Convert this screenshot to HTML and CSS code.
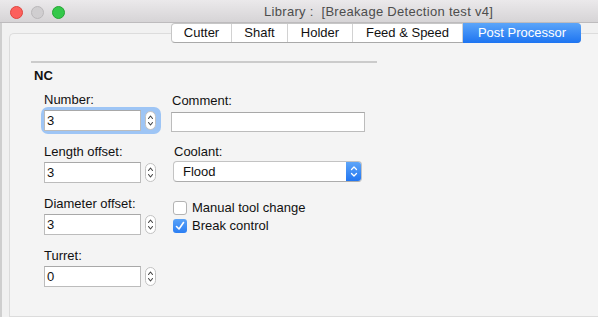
FILE: index.html
```html
<!DOCTYPE html>
<html>
<head>
<meta charset="utf-8">
<link rel="stylesheet" href="styles.css">
</head>
<body>
<div class="window">
  <div class="titlebar">
    <div class="lights">
      <span class="light red"></span>
      <span class="light gray"></span>
      <span class="light green"></span>
    </div>
    <div class="title">Library :&nbsp; [Breakage Detection test v4]</div>
  </div>
  <div class="content">
    <div class="tabs">
      <div class="tab t1">Cutter</div>
      <div class="tab t2">Shaft</div>
      <div class="tab t3">Holder</div>
      <div class="tab t4">Feed &amp; Speed</div>
      <div class="tab t5 active">Post Processor</div>
    </div>
    <div class="tabbox">
      <div class="section">
        <div class="rule"></div>
        <div class="section-title">NC</div>
        <div class="form">
          <div class="col left">
            <div class="group">
              <div class="label">Number:</div>
              <div class="field focus">
                <div class="input">3</div>
                <div class="stepper"><svg width="11" height="19" viewBox="0 0 11 19"><path d="M3.5 7.5 L5.5 5 L7.5 7.5 M3.5 11.5 L5.5 14 L7.5 11.5" fill="none" stroke="#444" stroke-width="1.1" stroke-linecap="round" stroke-linejoin="round"/></svg></div>
              </div>
            </div>
            <div class="group">
              <div class="label">Length offset:</div>
              <div class="field">
                <div class="input">3</div>
                <div class="stepper"><svg width="11" height="19" viewBox="0 0 11 19"><path d="M3.5 7.5 L5.5 5 L7.5 7.5 M3.5 11.5 L5.5 14 L7.5 11.5" fill="none" stroke="#444" stroke-width="1.1" stroke-linecap="round" stroke-linejoin="round"/></svg></div>
              </div>
            </div>
            <div class="group">
              <div class="label">Diameter offset:</div>
              <div class="field">
                <div class="input">3</div>
                <div class="stepper"><svg width="11" height="19" viewBox="0 0 11 19"><path d="M3.5 7.5 L5.5 5 L7.5 7.5 M3.5 11.5 L5.5 14 L7.5 11.5" fill="none" stroke="#444" stroke-width="1.1" stroke-linecap="round" stroke-linejoin="round"/></svg></div>
              </div>
            </div>
            <div class="group">
              <div class="label">Turret:</div>
              <div class="field">
                <div class="input">0</div>
                <div class="stepper"><svg width="11" height="19" viewBox="0 0 11 19"><path d="M3.5 7.5 L5.5 5 L7.5 7.5 M3.5 11.5 L5.5 14 L7.5 11.5" fill="none" stroke="#444" stroke-width="1.1" stroke-linecap="round" stroke-linejoin="round"/></svg></div>
              </div>
            </div>
          </div>
          <div class="col right">
            <div class="label comment-label">Comment:</div>
            <div class="text-input"></div>
            <div class="label coolant-label">Coolant:</div>
            <div class="popup">
              <span class="popup-text">Flood</span>
              <span class="popup-arrows"><svg width="16" height="21" viewBox="0 0 16 21"><path d="M5.5 8.5 L8 6 L10.5 8.5 M5.5 12.5 L8 15 L10.5 12.5" fill="none" stroke="#fff" stroke-width="1.3" stroke-linecap="round" stroke-linejoin="round"/></svg></span>
            </div>
            <div class="checks">
              <div class="check-row"><span class="checkbox"></span><span>Manual tool change</span></div>
              <div class="check-row"><span class="checkbox checked"><svg width="14" height="14" viewBox="0 0 14 14"><path d="M3.5 7.5 L6 10 L10.5 3.5" fill="none" stroke="#fff" stroke-width="1.6" stroke-linecap="round" stroke-linejoin="round"/></svg></span><span>Break control</span></div>
            </div>
          </div>
        </div>
      </div>
    </div>
  </div>
</div>
</body>
</html>
```
FILE: styles.css
```css
html, body {
  margin: 0;
  padding: 0;
}
body {
  width: 598px;
  height: 317px;
  overflow: hidden;
  font-family: "Liberation Sans", Arial, sans-serif;
  font-size: 13px;
  color: #111;
  background: #f0f0f0;
}
.window {
  width: 598px;
  height: 317px;
  display: flex;
  flex-direction: column;
  overflow: hidden;
}
.titlebar {
  height: 22px;
  flex: none;
  display: flex;
  align-items: center;
  background: linear-gradient(#ebe9eb, #d6d4d6);
  border-bottom: 1px solid #bdbbbd;
}
.lights {
  display: flex;
  gap: 8px;
  padding-left: 10px;
  margin-top: 3px;
}
.light {
  width: 11px;
  height: 11px;
  border-radius: 50%;
  display: block;
}
.red { background: #fc605c; border: 0.5px solid #e0443e; }
.gray { background: #d0ced0; border: 0.5px solid #bab8ba; }
.green { background: #34c84a; border: 0.5px solid #24a634; }
.title {
  margin-left: 199px;
  color: #4d4d4d;
  font-size: 13px;
  letter-spacing: 0.3px;
  line-height: 16px;
  margin-top: 1px;
  white-space: nowrap;
}
.content {
  flex: 1;
  display: flex;
  flex-direction: column;
  border-left: 2px solid #cfcfcf;
  background: #f1f1f1;
}
.tabs {
  display: flex;
  margin-top: 0;
  margin-left: 169px;
  height: 20px;
  position: relative;
  z-index: 1;
  align-self: flex-start;
  border: 1px solid #c6c6c6;
  border-bottom-color: #a9a9a9;
  border-radius: 4px;
  background: #fff;
  box-sizing: border-box;
}
.tab {
  text-align: center;
  line-height: 18px;
  color: #111;
  border-right: 1px solid #d2d2d2;
  white-space: nowrap;
}
.t1 { width: 59px; }
.t2 { width: 55px; }
.t3 { width: 64px; }
.t4 { width: 109px; }
.t5 { width: 118px; border-right: none; }
.tab.active {
  background: linear-gradient(#5ba5f9, #1d74f1);
  color: #fff;
  border-radius: 0 4px 4px 0;
  margin: -1px -1px -1px 0;
  line-height: 20px;
}
.tabbox {
  flex: 1;
  margin-top: -10px;
  margin-left: 7px;
  background: #f4f4f4;
  border: 1px solid #dcdcdc;
  border-right: none;
  border-radius: 5px 0 0 0;
  padding-top: 27px;
  padding-left: 21px;
}
.section {
  width: 346px;
}
.rule {
  height: 2px;
  background: #cbcbcb;
}
.section-title {
  margin-top: 5px;
  padding-left: 3px;
  font-weight: bold;
  line-height: 16px;
}
.form {
  display: grid;
  grid-template-columns: 127px 200px;
  margin-top: 8px;
  padding-left: 13px;
}
.col {
  display: flex;
  flex-direction: column;
}
.left {
  gap: 13px;
}
.label {
  line-height: 16px;
  white-space: nowrap;
}
.group .label {
  margin-bottom: 2px;
}
.field {
  display: flex;
  align-items: center;
  gap: 4px;
  width: 114px;
  height: 21px;
}
.field.focus {
  background: #9ec5f5;
  box-shadow: 0 0 0 3px #9ec5f5;
  border-radius: 4px;
}
.input {
  width: 97px;
  height: 21px;
  box-sizing: border-box;
  border: 1px solid #bcbcbc;
  border-top-color: #a8a8a8;
  background: #fff;
  padding-left: 2px;
  line-height: 19px;
  font-size: 13px;
}
.stepper {
  width: 11px;
  height: 19px;
  box-sizing: border-box;
  border: 1px solid #c2c2c2;
  border-radius: 6px;
  background: #fff;
  display: flex;
  align-items: center;
  justify-content: center;
  overflow: hidden;
}
.stepper svg {
  flex: none;
}
.comment-label {
  margin-top: 1px;
  padding-left: 1px;
}
.text-input {
  margin-top: 3px;
  width: 194px;
  height: 20px;
  box-sizing: border-box;
  border: 1px solid #bcbcbc;
  border-top-color: #a8a8a8;
  background: #fff;
}
.coolant-label {
  margin-top: 12px;
  padding-left: 3px;
}
.popup {
  margin-top: 1px;
  margin-left: 2px;
  width: 189px;
  height: 21px;
  box-sizing: border-box;
  border: 1px solid #c3c3c3;
  border-bottom-color: #acacac;
  border-radius: 4px;
  background: #fff;
  display: flex;
  align-items: center;
  justify-content: space-between;
  overflow: hidden;
}
.popup-text {
  padding-left: 9px;
  line-height: 19px;
}
.popup-arrows {
  width: 16px;
  height: 21px;
  margin: -1px -1px -1px 0;
  background: linear-gradient(#62a8f9, #1f74f1);
  border-radius: 0 4px 4px 0;
  display: flex;
}
.checks {
  margin-top: 17px;
  margin-left: 2px;
  display: flex;
  flex-direction: column;
}
.check-row {
  display: flex;
  align-items: center;
  gap: 5px;
  height: 18px;
  line-height: 16px;
}
.checkbox {
  width: 14px;
  height: 14px;
  box-sizing: border-box;
  border: 1px solid #b3b3b3;
  border-radius: 3px;
  background: #fff;
  display: flex;
  flex: none;
}
.checkbox.checked {
  border: none;
  background: linear-gradient(#5aa3f8, #2b7ef3);
}
```
